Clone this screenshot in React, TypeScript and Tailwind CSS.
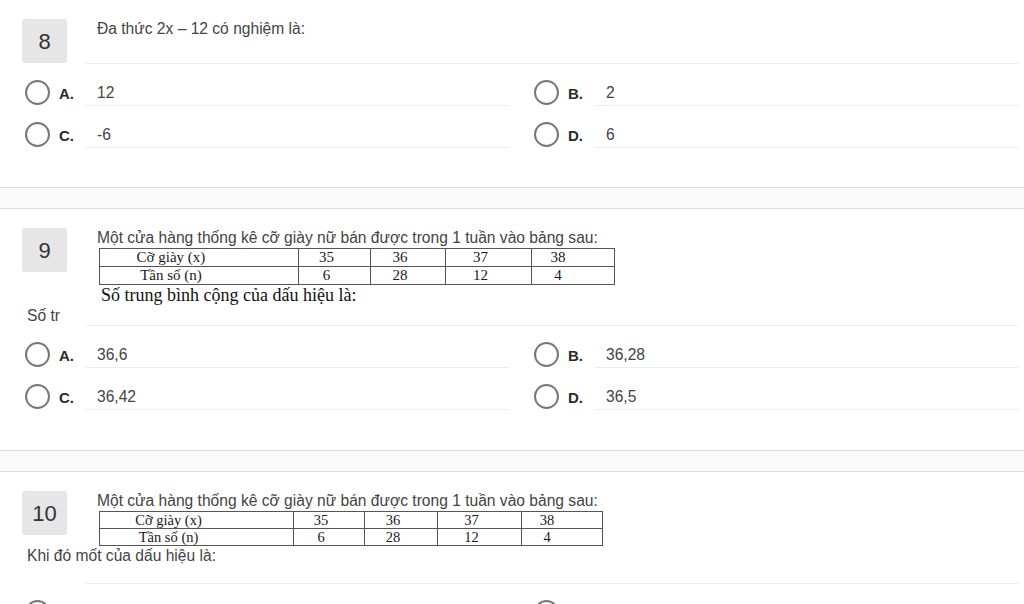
import React from "react";

type Option = { key: string; text: string };

interface TableSpec {
  widths: number[];
  total: number;
  cell: string;
  font: string;
}

const ROWS = [
  ["Cỡ giày (x)", "35", "36", "37", "38"],
  ["Tần số (n)", "6", "28", "12", "4"],
];

function NumberBox({ n }: { n: number }) {
  return (
    <div className="flex-shrink-0 w-[45px] h-[44px] rounded-[3px] bg-[#e6e6e6] flex items-center justify-center pt-[2px] text-[22px] leading-none text-[#333]">
      {n}
    </div>
  );
}

function ShoeTable({ spec }: { spec: TableSpec }) {
  return (
    <table
      className={`ml-[2px] table-fixed border-collapse text-[#1a1a1a] font-['Liberation_Serif','Times_New_Roman',serif] ${spec.font}`}
      style={{ width: spec.total }}
    >
      <colgroup>
        {spec.widths.map((w, i) => (
          <col key={i} style={{ width: w }} />
        ))}
      </colgroup>
      <tbody>
        {ROWS.map((row, r) => (
          <tr key={r}>
            {row.map((c, i) => (
              <td
                key={i}
                className={`border border-[#555] p-0 text-center ${spec.cell} ${
                  i === 0 ? "pr-[56px]" : i === 4 ? "pr-[30px]" : "pr-[16px]"
                }`}
              >
                {c}
              </td>
            ))}
          </tr>
        ))}
      </tbody>
    </table>
  );
}

function OptionRow({ opt }: { opt: Option }) {
  return (
    <div className="flex items-end">
      <div className="ml-[3px] mb-[1px] w-[25px] h-[25px] rounded-full border-2 border-[#777] flex-shrink-0" />
      <div className="ml-[9px] mb-[1px] w-[27px] h-[25px] flex items-center pt-[3px] text-[15px] font-bold text-[#2a2a2a]">
        {opt.key}.
      </div>
      <div className="flex-1 h-[42px] pt-[17px] pl-[11px] border-b border-[#ececec] text-[15.6px] leading-[23px] text-[#444]">
        {opt.text}
      </div>
    </div>
  );
}

function Options({ options }: { options: Option[] }) {
  return (
    <div className="grid grid-cols-2 gap-x-[22px]">
      {options.map((o) => (
        <OptionRow key={o.key} opt={o} />
      ))}
    </div>
  );
}

function Card({
  children,
  top = true,
  pb,
}: {
  children: React.ReactNode;
  top?: boolean;
  pb: string;
}) {
  return (
    <div
      className={`bg-white border-b border-[#dcdcdc] pt-[19px] pl-[22px] pr-[6px] ${
        top ? "border-t" : ""
      } ${pb}`}
    >
      {children}
    </div>
  );
}

function Gap() {
  return <div className="h-[20px] bg-[#fafafa]" />;
}

const Q9_TABLE: TableSpec = {
  widths: [199, 72, 75, 86, 83],
  total: 515,
  cell: "h-[17px] leading-[17px]",
  font: "text-[15px]",
};

const Q10_TABLE: TableSpec = {
  widths: [194, 71, 73, 84, 81],
  total: 503,
  cell: "h-[16px] leading-[16px]",
  font: "text-[14.5px]",
};

export default function App() {
  return (
    <div className="w-[1024px] min-h-screen bg-white font-['Liberation_Sans',Arial,sans-serif] text-[#444]">
      {/* Question 8 */}
      <Card top={false} pb="pb-[39px]">
        <div className="flex">
          <NumberBox n={8} />
          <div className="flex-1 ml-[19px] pl-[11px] h-[45px] border-b border-[#ececec] text-[15.6px] leading-[19px]">
            Đa thức 2x – 12 có nghiệm là:
          </div>
        </div>
        <Options
          options={[
            { key: "A", text: "12" },
            { key: "B", text: "2" },
            { key: "C", text: "-6" },
            { key: "D", text: "6" },
          ]}
        />
      </Card>

      <Gap />

      {/* Question 9 */}
      <Card pb="pb-[40px]">
        <div className="flex">
          <NumberBox n={9} />
          <div className="flex-1 ml-[19px] pl-[11px]">
            <p className="text-[15.6px] leading-[20px]">
              Một cửa hàng thống kê cỡ giày nữ bán được trong 1 tuần vào bảng sau:
            </p>
            <ShoeTable spec={Q9_TABLE} />
            <p className="ml-[4px] text-[18px] leading-[20px] text-[#111] font-['Liberation_Serif','Times_New_Roman',serif]">
              Số trung bình cộng của dấu hiệu là:
            </p>
          </div>
        </div>
        <div className="flex items-end">
          <span className="w-[64px] pl-[5px] text-[15.6px] leading-[20px]">Số tr</span>
          <div className="flex-1 h-[21px] border-b border-[#ececec]" />
        </div>
        <Options
          options={[
            { key: "A", text: "36,6" },
            { key: "B", text: "36,28" },
            { key: "C", text: "36,42" },
            { key: "D", text: "36,5" },
          ]}
        />
      </Card>

      <Gap />

      {/* Question 10 */}
      <Card pb="pb-[40px]">
        <div className="flex">
          <NumberBox n={10} />
          <div className="flex-1 ml-[19px] pl-[11px]">
            <p className="text-[15.6px] leading-[20px]">
              Một cửa hàng thống kê cỡ giày nữ bán được trong 1 tuần vào bảng sau:
            </p>
            <ShoeTable spec={Q10_TABLE} />
          </div>
        </div>
        <p className="pl-[5px] text-[15.6px] leading-[20px]">Khi đó mốt của dấu hiệu là:</p>
        <div className="ml-[64px] h-[18px] border-b border-[#ececec]" />
        <Options
          options={[
            { key: "A", text: "35" },
            { key: "B", text: "36" },
            { key: "C", text: "37" },
            { key: "D", text: "38" },
          ]}
        />
      </Card>
    </div>
  );
}
